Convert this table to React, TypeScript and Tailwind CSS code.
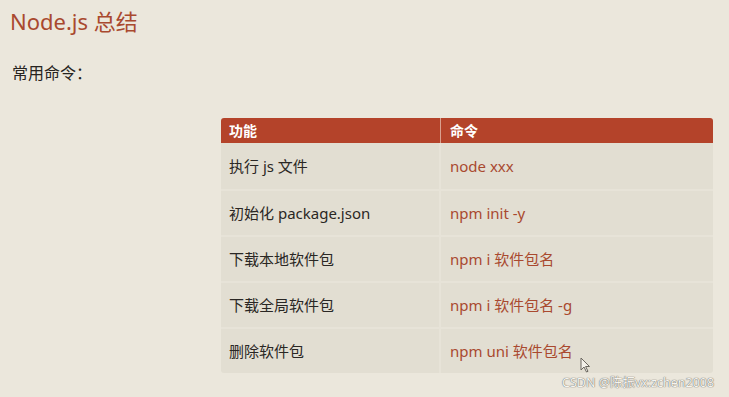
const rows: [string, string][] = [
  ["执行 js 文件", "node xxx"],
  ["初始化 package.json", "npm init -y"],
  ["下载本地软件包", "npm i 软件包名"],
  ["下载全局软件包", "npm i 软件包名 -g"],
  ["删除软件包", "npm uni 软件包名"],
];

const font = { fontFamily: '"Noto Sans", "Noto Sans CJK SC", sans-serif' };

function Cursor() {
  return (
    <svg width="11" height="16" viewBox="0 0 11 16" className="absolute left-[580px] top-[357px]">
      <path d="M1 1 L1 13 L4 10 L6.5 15 L8 14.3 L5.6 9.5 L9.5 9.5 Z" fill="#f4f1ea" stroke="#6b6760" strokeWidth="1" />
    </svg>
  );
}

export default function App() {
  return (
    <div className="relative h-[397px] w-[729px] overflow-hidden bg-[#ebe7dc]" style={font}>
      <div className="flex flex-col px-[10px] pt-[6px]">
        <h1 className="text-[22px] leading-[30px] text-[#a9492f]">Node.js 总结</h1>
        <p className="mt-[27px] pl-[2px] text-[16px] leading-[20px] text-[#262320]">常用命令：</p>
        <div className="ml-[211px] mt-[35px] w-[492px] overflow-hidden rounded-[3px]">
          <div className="grid grid-cols-[220px_1fr] h-[25px] bg-[#b4432a] text-[14px] font-bold text-white">
            <div className="flex items-center border-r border-[#d9a08f] pl-[8px]">功能</div>
            <div className="flex items-center pl-[9px]">命令</div>
          </div>
          {rows.map(([fn, cmd], i) => (
            <div
              key={fn}
              className={`grid grid-cols-[220px_1fr] h-[46px] bg-[#e2ded2] text-[15px] ${i > 0 ? "border-t-2 border-[#e7e3d8]" : ""}`}
            >
              <div className="flex items-center border-r-2 border-[#e7e3d8] pl-[8px] text-[#2a2724]">{fn}</div>
              <div className="flex items-center pl-[9px] text-[#a9492f]">{cmd}</div>
            </div>
          ))}
        </div>
      </div>
      <Cursor />
      <span className="absolute left-[562px] top-[374px] text-[12.5px] leading-[18px] text-[#f5f4f0] [text-shadow:0_0_1px_#6f6c66,0_0_1px_#6f6c66]">
        CSDN @陈振vx:zchen2008
      </span>
    </div>
  );
}
